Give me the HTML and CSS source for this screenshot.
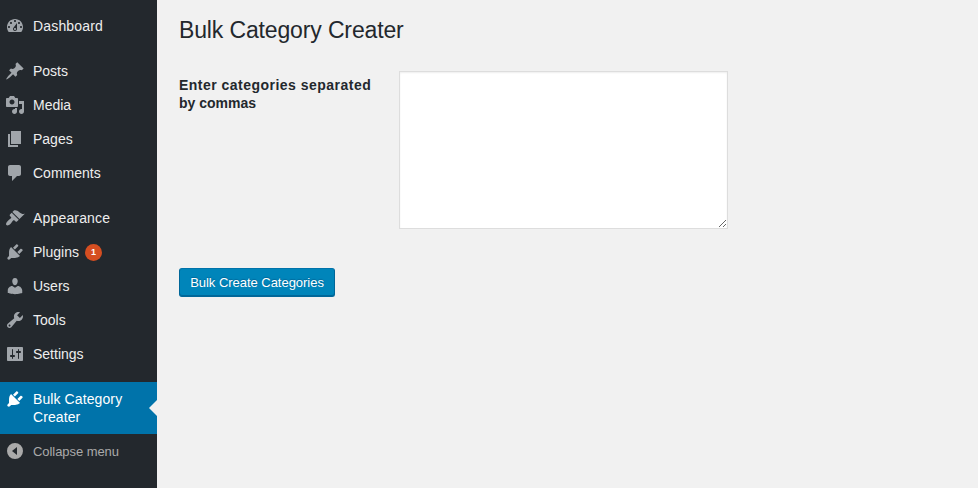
FILE: index.html
```html
<!DOCTYPE html>
<html lang="en">
<head>
<meta charset="utf-8">
<title>Bulk Category Creater</title>
<link rel="stylesheet" href="styles.css">
</head>
<body>
<div class="layout">
<nav class="menu">
  <a class="item wide"><svg class="icon" viewBox="0 0 20 20"><path d="M3.76 16h12.48c1.1-1.37 1.76-3.11 1.76-5 0-4.42-3.58-8-8-8s-8 3.58-8 8c0 1.89.66 3.63 1.76 5zM10 4c.55 0 1 .45 1 1s-.45 1-1 1-1-.45-1-1 .45-1 1-1zM6 6c.55 0 1 .45 1 1s-.45 1-1 1-1-.45-1-1 .45-1 1-1zm8 0c.55 0 1 .45 1 1s-.45 1-1 1-1-.45-1-1 .45-1 1-1zm-5.37 5.55L12 7v6c0 1.1-.9 2-2 2s-2-.9-2-2c0-.57.24-1.08.63-1.45zM4 10c.55 0 1 .45 1 1s-.45 1-1 1-1-.45-1-1 .45-1 1-1zm12 0c.55 0 1 .45 1 1s-.45 1-1 1-1-.45-1-1 .45-1 1-1zm-5 3c0-.55-.45-1-1-1s-1 .45-1 1 .45 1 1 1 1-.45 1-1z"/></svg><span>Dashboard</span></a>
  <a class="item group"><svg class="icon" viewBox="0 0 20 20"><path d="M10.44 3.02l1.82-1.82 6.36 6.35-1.83 1.82c-1.05-.68-2.48-.57-3.41.36l-.75.75c-.92.93-1.04 2.35-.35 3.41l-1.83 1.82-2.41-2.41-2.8 2.79c-.42.42-3.38 2.71-3.8 2.29s1.86-3.39 2.28-3.81l2.79-2.79L4.1 9.36l1.83-1.82c1.05.69 2.48.57 3.4-.36l.75-.75c.93-.92 1.05-2.35.36-3.41z"/></svg><span>Posts</span></a>
  <a class="item"><svg class="icon" viewBox="0 0 20 20"><path d="M13 11V4c0-.55-.45-1-1-1h-1.67L9 1H5L3.67 3H2c-.55 0-1 .45-1 1v7c0 .55.45 1 1 1h10c.55 0 1-.45 1-1zM7 4.5c1.38 0 2.5 1.12 2.5 2.5S8.38 9.5 7 9.5 4.5 8.38 4.5 7 5.62 4.5 7 4.5zM14 6h5v10.5c0 1.38-1.12 2.5-2.5 2.5S14 17.88 14 16.5s1.12-2.5 2.5-2.5c.17 0 .34.02.5.05V9h-3V6zm-4 8.05V13h2v3.5c0 1.38-1.12 2.5-2.5 2.5S7 17.88 7 16.5 8.12 14 9.5 14c.17 0 .34.02.5.05z"/></svg><span>Media</span></a>
  <a class="item"><svg class="icon" viewBox="0 0 20 20"><path d="M6 15V2h10v13H6zm-1 1h8v2H3V5h2v11z"/></svg><span>Pages</span></a>
  <a class="item"><svg class="icon" viewBox="0 0 20 20"><path d="M5 2h9c1.1 0 2 .9 2 2v7c0 1.1-.9 2-2 2h-2l-5 5v-5H5c-1.1 0-2-.9-2-2V4c0-1.1.9-2 2-2z"/></svg><span>Comments</span></a>
  <a class="item group wide"><svg class="icon" viewBox="0 0 20 20"><path d="M14.48 11.06L7.41 3.99l1.5-1.5c.5-.56 2.3-.47 3.51.32 1.21.8 1.43 1.28 2.91 2.1 1.18.64 2.45 1.26 4.45.85zm-.71.71L6.7 4.7 4.93 6.47c-.39.39-.39 1.02 0 1.41l1.06 1.06c.39.39.39 1.03 0 1.42-.6.6-1.43 1.11-2.21 1.69-.35.26-.7.53-1.01.84C1.43 14.23.4 16.08 1.4 17.07c.99 1 2.84-.03 4.18-1.36.31-.31.58-.66.85-1.02.57-.78 1.08-1.61 1.69-2.21.39-.39 1.02-.39 1.41 0l1.06 1.06c.39.39 1.02.39 1.41 0z"/></svg><span>Appearance</span></a>
  <a class="item"><svg class="icon" viewBox="0 0 20 20"><path d="M13.11 4.36L9.87 7.6 8 5.73l3.24-3.24c.35-.34 1.05-.2 1.56.32.52.51.66 1.21.31 1.55zm-8 1.77l.91-1.12 9.01 9.01-1.19.84c-.71.71-2.63 1.16-3.82 1.16H6.14L4.9 17.26c-.59.59-1.54.59-2.12 0-.59-.58-.59-1.53 0-2.12l1.24-1.24v-3.88c0-1.13.4-3.19 1.09-3.89zm7.26 3.97l3.24-3.24c.34-.35 1.04-.21 1.55.31.52.51.66 1.21.31 1.55l-3.24 3.25z"/></svg><span>Plugins</span><b class="count">1</b></a>
  <a class="item"><svg class="icon" viewBox="0 0 20 20"><path d="M10 9.25c-2.27 0-2.73-3.44-2.73-3.44C7 4.02 7.82 2 9.97 2c2.16 0 2.98 2.02 2.71 3.81 0 0-.41 3.44-2.68 3.44zm0 2.57L12.72 10c2.39 0 4.52 2.33 4.52 4.53v2.49s-3.65 1.13-7.24 1.13c-3.65 0-7.24-1.13-7.24-1.13v-2.49c0-2.25 1.94-4.48 4.47-4.48z"/></svg><span>Users</span></a>
  <a class="item"><svg class="icon" viewBox="0 0 20 20"><path d="M16.68 9.77c-1.34 1.34-3.3 1.67-4.95.99l-5.41 6.52c-.99.99-2.59.99-3.58 0s-.99-2.59 0-3.57l6.52-5.42c-.68-1.65-.35-3.61.99-4.95 1.28-1.28 3.12-1.62 4.72-1.06l-2.89 2.89 2.82 2.82 2.86-2.87c.53 1.58.18 3.39-1.08 4.65zM3.81 16.21c.4.39 1.04.39 1.43 0 .4-.4.4-1.04 0-1.43-.39-.4-1.03-.4-1.43 0-.39.39-.39 1.03 0 1.43z"/></svg><span>Tools</span></a>
  <a class="item"><svg class="icon" viewBox="0 0 20 20"><path d="M18 16V4c0-.55-.45-1-1-1H3c-.55 0-1 .45-1 1v12c0 .55.45 1 1 1h14c.55 0 1-.45 1-1zM8 11h1c.55 0 1 .45 1 1s-.45 1-1 1H8v1.5c0 .28-.22.5-.5.5s-.5-.22-.5-.5V13H6c-.55 0-1-.45-1-1s.45-1 1-1h1V5.5c0-.28.22-.5.5-.5s.5.22.5.5V11zm5-2h-1c-.55 0-1-.45-1-1s.45-1 1-1h1V5.5c0-.28.22-.5.5-.5s.5.22.5.5V7h1c.55 0 1 .45 1 1s-.45 1-1 1h-1v5.5c0 .28-.22.5-.5.5s-.5-.22-.5-.5V9z"/></svg><span>Settings</span></a>
  <a class="item group current"><svg class="icon" viewBox="0 0 20 20"><path d="M13.11 4.36L9.87 7.6 8 5.73l3.24-3.24c.35-.34 1.05-.2 1.56.32.52.51.66 1.21.31 1.55zm-8 1.77l.91-1.12 9.01 9.01-1.19.84c-.71.71-2.63 1.16-3.82 1.16H6.14L4.9 17.26c-.59.59-1.54.59-2.12 0-.59-.58-.59-1.53 0-2.12l1.24-1.24v-3.88c0-1.13.4-3.19 1.09-3.89zm7.26 3.97l3.24-3.24c.34-.35 1.04-.21 1.55.31.52.51.66 1.21.31 1.55l-3.24 3.25z"/></svg><span>Bulk Category Creater</span></a>
  <a class="item collapse"><svg class="icon" viewBox="0 0 20 20"><path fill-rule="evenodd" d="M10 2a8 8 0 1 0 0 16 8 8 0 0 0 0-16zM12 6v8l-5-4z"/></svg><span>Collapse menu</span></a>
</nav>
<main class="content">
  <h1>Bulk Category Creater</h1>
  <form>
    <div class="field">
      <label for="categories"><span class="lead">Enter categories separated</span> by commas</label>
      <textarea id="categories"></textarea>
    </div>
    <button type="button">Bulk Create Categories</button>
  </form>
</main>
</div>
</body>
</html>
```
FILE: styles.css
```css
* { box-sizing: border-box; }
body {
  margin: 0;
  background: #f1f1f1;
  color: #23282d;
  font-family: "Liberation Sans", Arial, sans-serif;
}
.layout { display: flex; height: 488px; overflow: hidden; }
.menu {
  width: 157px;
  flex: none;
  padding-top: 9px;
  background: #23282d;
}
.item {
  position: relative;
  display: flex;
  min-height: 34px;
  padding: 7px 20px 7px 5px;
  color: #eee;
  font-size: 14px;
  line-height: 18px;
}
.item span { margin-top: 1px; }
.wide { letter-spacing: 0.17px; }
.icon {
  width: 20px;
  height: 20px;
  margin-right: 8px;
  flex: none;
  fill: #a0a5aa;
}
.group { margin-top: 11px; }
.count {
  width: 17px;
  height: 17px;
  margin: 2px 0 0 6px;
  border-radius: 50%;
  background: #d54e21;
  color: #fff;
  font-size: 9px;
  line-height: 17px;
  text-align: center;
}
.current {
  height: 52px;
  background: #0073aa;
  color: #fff;
  letter-spacing: 0.1px;
}
.current .icon { fill: #fff; }
.current::after {
  content: "";
  position: absolute;
  top: 18px;
  right: 0;
  border: 8px solid transparent;
  border-left: 0;
  border-right-color: #f1f1f1;
}
.collapse { color: #aaa; font-size: 13px; letter-spacing: -0.06px; padding-right: 0; }
.collapse span { margin-top: 2px; }
.collapse .icon { fill: #aaa; }
.content { padding: 14px 22px; }
h1 {
  margin: 0;
  font-size: 23px;
  font-weight: 400;
  line-height: 32px;
  letter-spacing: -0.14px;
}
.field { display: flex; margin-top: 25px; }
label {
  width: 220px;
  padding: 5px 20px 0 0;
  font-size: 14px;
  font-weight: 700;
  line-height: 18px;
}
.lead { letter-spacing: 0.48px; }
textarea {
  width: 329px;
  height: 158px;
  margin: 0;
  padding: 2px 6px;
  border: 1px solid #ddd;
  background: #fff;
  box-shadow: inset 0 1px 2px rgba(0, 0, 0, 0.07);
}
button {
  display: block;
  width: 156px;
  height: 29px;
  margin-top: 39px;
  padding: 1px 0 0;
  border: 1px solid #006799;
  border-top-color: #0073aa;
  border-radius: 3px;
  background: #0085ba;
  box-shadow: inset 0 -1px 0 #006799;
  color: #fff;
  font: 13px/26px "Liberation Sans", Arial, sans-serif;
  letter-spacing: -0.03px;
  text-shadow: 0 -1px 1px #006799;
  white-space: nowrap;
}
```
